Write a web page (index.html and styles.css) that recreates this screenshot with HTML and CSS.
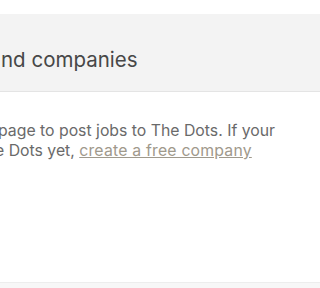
FILE: index.html
```html
<!DOCTYPE html>
<html>
<head>
<meta charset="utf-8">
<link rel="stylesheet" href="styles.css">
</head>
<body>
<div class="page">
  <header class="band">
    <h1 class="title">nd companies</h1>
  </header>
  <main class="content">
    <p class="intro">page to post jobs to The Dots. If your<br>e Dots yet, <a class="link" href="#">create a free company</a></p>
  </main>
  <footer class="foot"></footer>
</div>
</body>
</html>
```
FILE: styles.css
```css
html, body {
  margin: 0;
  padding: 0;
  background: #ffffff;
  overflow: hidden;
}
.page {
  display: flex;
  flex-direction: column;
  height: 288px;
  font-family: Inter, "Liberation Sans", Arial, sans-serif;
}
.band {
  margin-top: 14px;
  background: #f3f3f3;
  border-bottom: 1px solid #e4e4e4;
  padding: 34px 0 19px 0;
}
.title {
  margin: 0 0 0 1px;
  font-size: 20.5px;
  line-height: 24px;
  font-weight: normal;
  color: #474747;
  white-space: nowrap;
}
.content {
  flex: 1;
  padding-top: 29px;
}
.intro {
  margin: 0 0 0 -5px;
  text-indent: 3px;
  font-size: 15.8px;
  line-height: 20px;
  color: #6a6a6a;
  white-space: nowrap;
}
.link {
  color: #9f998c;
  text-decoration: underline;
  letter-spacing: 0.2px;
}
.foot {
  height: 5px;
  background: #f7f7f7;
  border-top: 1px solid #ededed;
}
```
